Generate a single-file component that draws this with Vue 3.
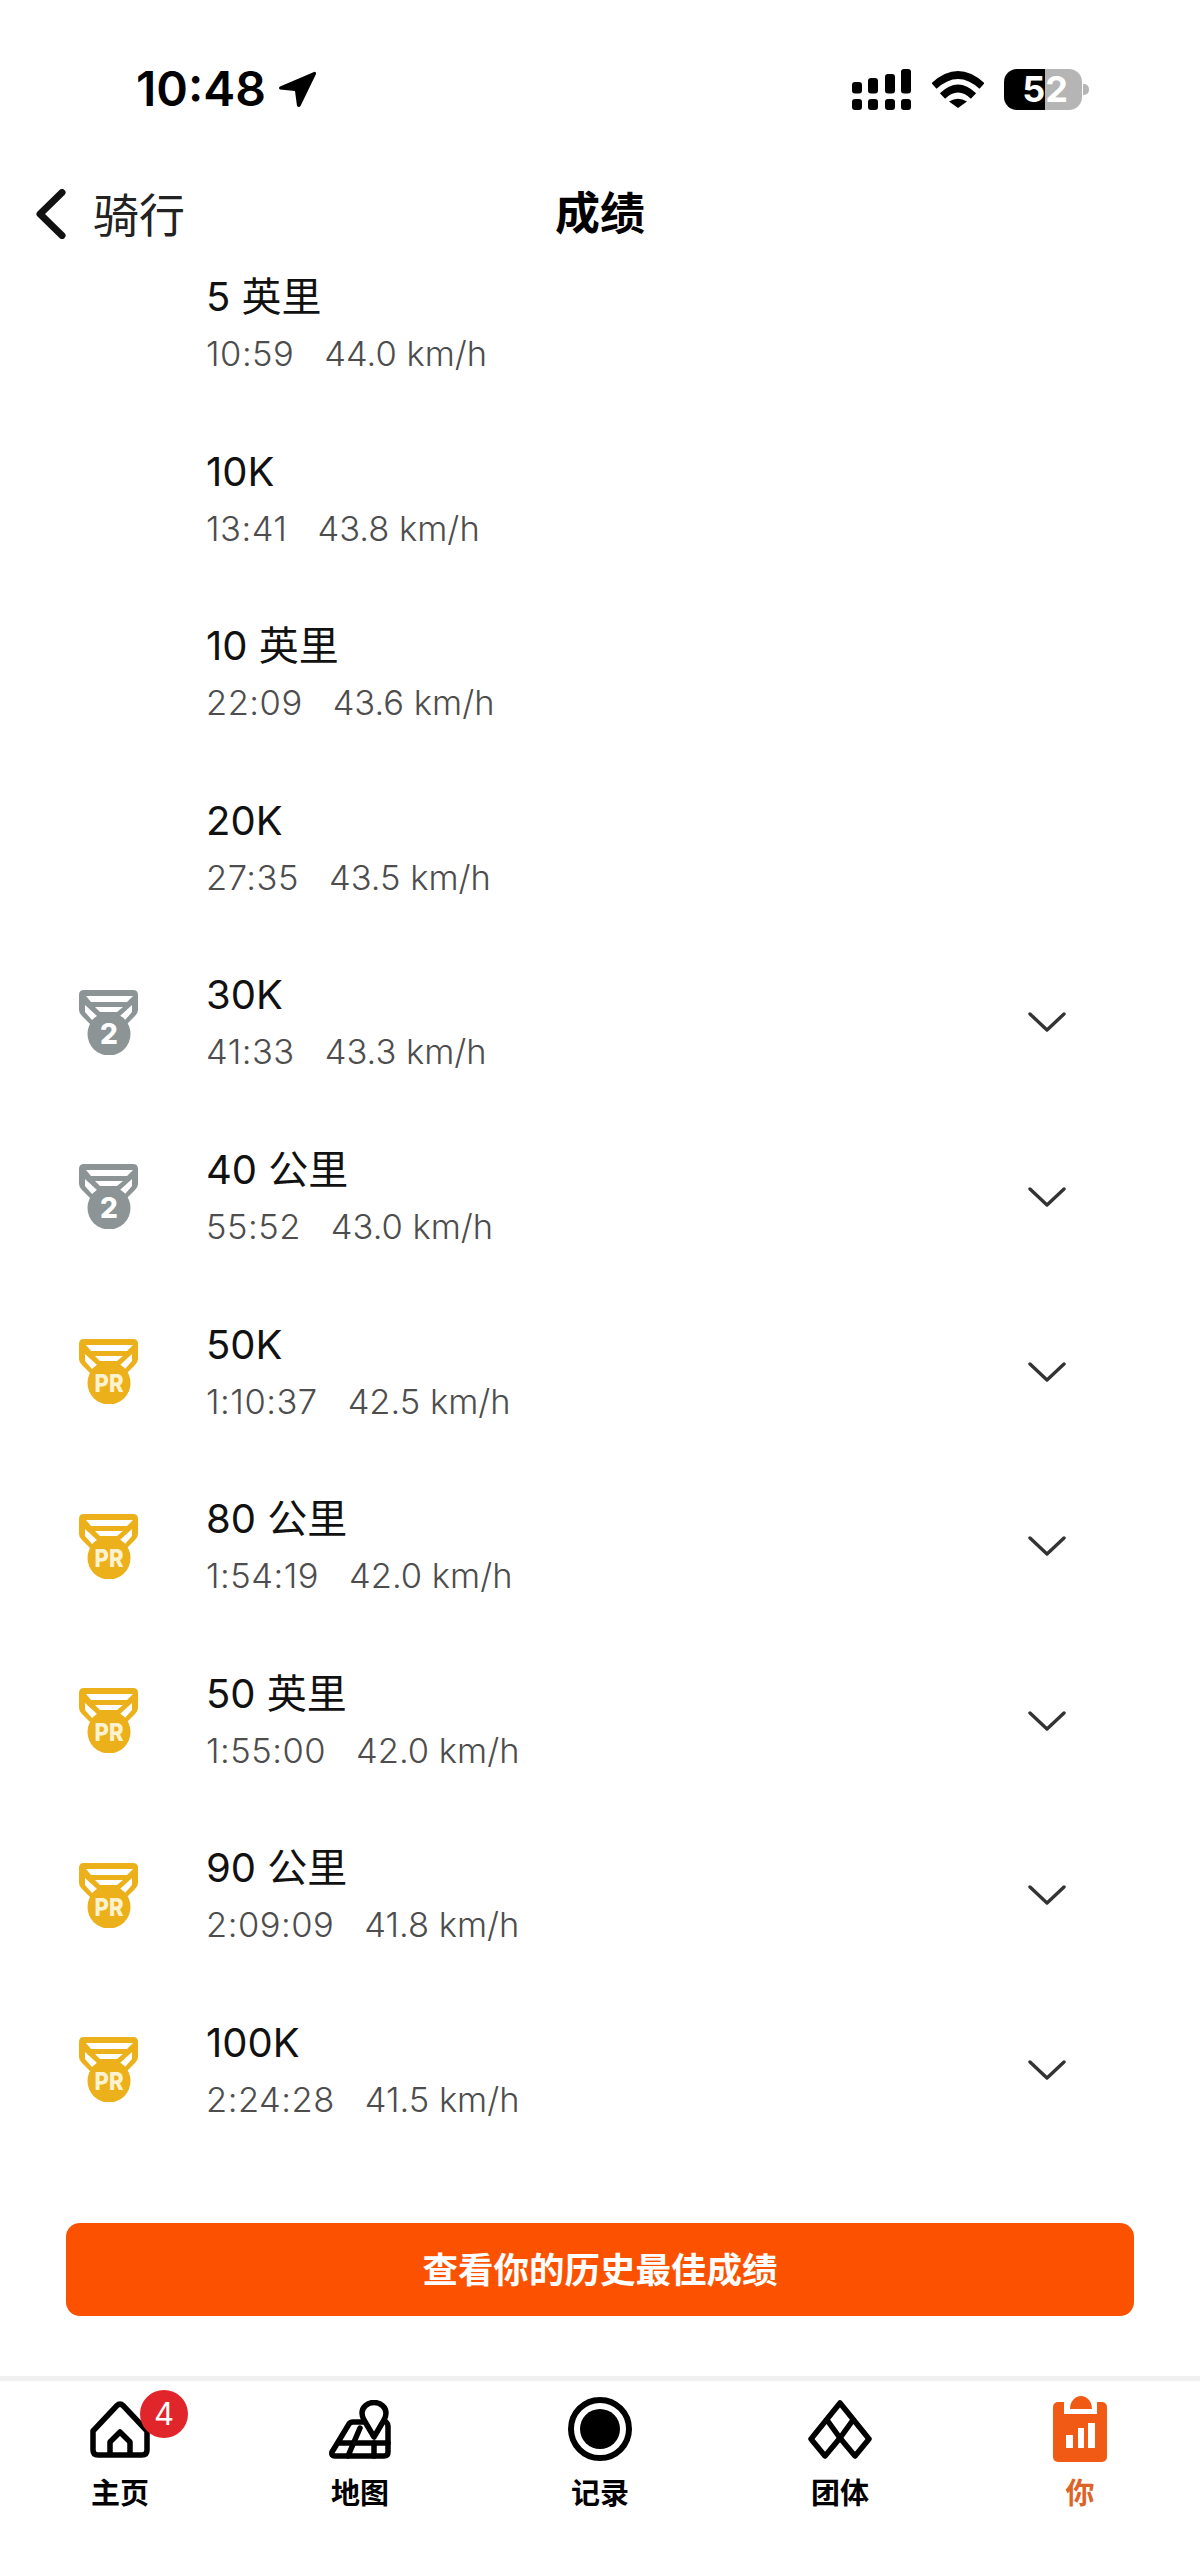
<template>
  <div class="page">
    <div class="status-bar">
      <div class="status-left">
        <span class="clock">10:48</span>
        <svg class="arrow" viewBox="0 0 39 37">
          <path d="M36 1 L2 15.5 Q0 17 2 18.5 L17 20 L19 35 Q21 37 22.5 35 L38 3 Q38 0 36 1 Z" />
        </svg>
      </div>
      <div class="status-right">
        <svg class="signal" viewBox="0 0 59 41">
          <rect v-for="x in dotX" :key="'d' + x" :x="x" y="30" width="10" height="11" rx="3" />
          <rect v-for="(x, i) in dotX" :key="'b' + x" :x="x" :y="barTop[i]" width="10" :height="24.5 - barTop[i]" rx="3" />
        </svg>
        <svg class="wifi" viewBox="0 0 52 37">
          <path d="M2 15 Q26 -7 50 15" fill="none" stroke="#000" stroke-width="7.5" />
          <path d="M10.5 25 Q26 10 41.5 25" fill="none" stroke="#000" stroke-width="7.5" />
          <path d="M17 30.5 Q26 25 35 30.5 L26 37 Z" />
        </svg>
        <div class="battery"><span>52</span></div>
        <div class="battery-nub"></div>
      </div>
    </div>

    <div class="nav-bar">
      <div class="back">
        <svg class="back-icon" viewBox="0 0 30 50">
          <path d="M26 3.5 L4 25 L26 46.5" fill="none" stroke="#111" stroke-width="7" stroke-linecap="round" stroke-linejoin="round" />
        </svg>
        <span class="back-label">骑行</span>
      </div>
      <h1 class="nav-title">成绩</h1>
    </div>

    <div class="list">
      <div v-for="row in rows" :key="row.title" class="row">
        <div class="row-inner">
          <div class="medal-cell">
            <svg v-if="row.medal" class="medal" :class="row.medal === 'PR' ? 'gold' : 'silver'" viewBox="0 0 59 65">
              <path class="medal-body" d="M5 0 H54 Q59 0 59 5 V20 Q59 23 56 26 L42 40 H17 L3 26 Q0 23 0 20 V5 Q0 0 5 0 Z" />
              <path fill="#fff" d="M7 6 H54 L48 12 H12 Z" />
              <path fill="#fff" d="M16 17 H44 L38 22 H21 Z" />
              <path fill="#fff" d="M6 15 L18 26 L13 30 L6 22 Z" />
              <path fill="#fff" d="M53 15 L41 26 L46 30 L53 22 Z" />
              <circle class="medal-body" cx="30" cy="44" r="21.5" />
              <text v-if="row.medal === 'PR'" class="medal-text pr" x="30" y="53" text-anchor="middle" textLength="29" lengthAdjust="spacingAndGlyphs">PR</text>
              <text v-else class="medal-text" x="30" y="54" text-anchor="middle">{{ row.medal }}</text>
            </svg>
          </div>
          <div class="row-text">
            <div class="row-title">{{ row.title }}</div>
            <div class="row-sub"><span class="row-time">{{ row.time }}</span><span>{{ row.speed }}</span></div>
          </div>
          <svg v-if="row.medal" class="chevron" viewBox="0 0 38 22">
            <path d="M2 3 L19 19 L36 3" fill="none" stroke="#333" stroke-width="3.4" stroke-linecap="round" stroke-linejoin="round" />
          </svg>
        </div>
      </div>
    </div>

    <div class="btn-wrap">
      <button class="history-btn">查看你的历史最佳成绩</button>
    </div>

    <div class="tab-bar">
      <div class="tab">
        <div class="tab-icon">
          <svg width="60" height="57" viewBox="0 0 60 57">
            <g fill="none" stroke="#000" stroke-width="5.5" stroke-linejoin="round">
              <path d="M3 30 L27 4.5 Q30 1.5 33 4.5 L57 30 V49 Q57 54 52 54 H8 Q3 54 3 49 Z" />
              <path d="M20 54 V41 L30 31 L40 41 V54" />
            </g>
          </svg>
          <span class="badge">4</span>
        </div>
        <span class="tab-label">主页</span>
      </div>
      <div class="tab">
        <div class="tab-icon">
          <svg width="62" height="59" viewBox="0 0 62 59">
            <g fill="none" stroke="#000" stroke-width="5.5" stroke-linejoin="round" stroke-linecap="round">
              <path d="M34 22 H24 Q21 22 20 24 L3 52 Q2 56 6 56 H55 Q59 56 59 52 V26 Q59 24 57 22" />
              <path d="M10 43 H59" />
              <path d="M31 28 L19 56" />
              <path d="M45 43 V56" />
              <path d="M45 37 L35 20 Q33 16 33 13 A12 10.5 0 0 1 57 13 Q57 16 55 20 Z" fill="#fff" />
            </g>
          </svg>
        </div>
        <span class="tab-label">地图</span>
      </div>
      <div class="tab">
        <div class="tab-icon">
          <svg width="64" height="64" viewBox="0 0 64 64">
            <circle cx="32" cy="32" r="29" fill="none" stroke="#000" stroke-width="6" />
            <circle cx="32" cy="32" r="20" />
          </svg>
        </div>
        <span class="tab-label">记录</span>
      </div>
      <div class="tab">
        <div class="tab-icon">
          <svg width="64" height="59" viewBox="0 0 64 59">
            <g fill="none" stroke="#000" stroke-width="5.5" stroke-linejoin="round" stroke-linecap="round">
              <path d="M32 3 L61 39 L47 56 L32 38 L17 56 L3 39 Z" />
              <path d="M19 20 L32 38 L45 20" />
            </g>
          </svg>
        </div>
        <span class="tab-label">团体</span>
      </div>
      <div class="tab active">
        <div class="tab-icon">
          <svg width="54" height="66" viewBox="0 0 54 66">
            <rect y="6" width="54" height="60" rx="5" fill="#f15a14" />
            <rect x="11" y="0" width="33" height="18" fill="#fff" />
            <path d="M17 13 A11 13 0 0 1 39 13 Z" fill="#f15a14" />
            <rect x="13" y="39" width="7" height="13" fill="#fff" />
            <rect x="25" y="32" width="6" height="20" fill="#fff" />
            <rect x="35" y="27" width="7" height="25" fill="#fff" />
          </svg>
        </div>
        <span class="tab-label">你</span>
      </div>
    </div>
  </div>
</template>

<script setup>
const dotX = [0, 16, 33, 49]
const barTop = [13, 9, 5, 0]

const rows = [
  { title: '5 英里', time: '10:59', speed: '44.0 km/h' },
  { title: '10K', time: '13:41', speed: '43.8 km/h' },
  { title: '10 英里', time: '22:09', speed: '43.6 km/h' },
  { title: '20K', time: '27:35', speed: '43.5 km/h' },
  { title: '30K', time: '41:33', speed: '43.3 km/h', medal: '2' },
  { title: '40 公里', time: '55:52', speed: '43.0 km/h', medal: '2' },
  { title: '50K', time: '1:10:37', speed: '42.5 km/h', medal: 'PR' },
  { title: '80 公里', time: '1:54:19', speed: '42.0 km/h', medal: 'PR' },
  { title: '50 英里', time: '1:55:00', speed: '42.0 km/h', medal: 'PR' },
  { title: '90 公里', time: '2:09:09', speed: '41.8 km/h', medal: 'PR' },
  { title: '100K', time: '2:24:28', speed: '41.5 km/h', medal: 'PR' }
]
</script>

<style>
html, body {
  margin: 0;
  background: #fff;
}
</style>

<style scoped>
.page {
  width: 1200px;
  height: 2570px;
  display: flex;
  flex-direction: column;
  background: #fff;
  color: #000;
  font-family: Inter, "Noto Sans CJK SC", sans-serif;
  overflow: hidden;
}

.status-bar {
  height: 178px;
  flex: none;
  display: flex;
  align-items: center;
  justify-content: space-between;
  padding: 0 111px 0 136px;
}

.status-left {
  display: flex;
  align-items: center;
  gap: 12px;
}

.clock {
  font-size: 48px;
  font-weight: 600;
  line-height: 1;
}

.arrow {
  width: 39px;
  height: 37px;
}

.status-right {
  display: flex;
  align-items: center;
}

.signal {
  width: 59px;
  height: 41px;
  margin-right: 21px;
}

.wifi {
  width: 52px;
  height: 37px;
  margin-right: 20px;
}

.battery {
  width: 78px;
  height: 41px;
  border-radius: 13px;
  background: linear-gradient(90deg, #000 0 52%, #b5b5b5 52% 100%);
  color: #fff;
  font-size: 36px;
  font-weight: 700;
  line-height: 41px;
  text-align: center;
}

.battery span {
  position: relative;
  left: 2px;
}

.battery-nub {
  width: 6px;
  height: 11px;
  margin-left: 1px;
  border-radius: 0 5px 5px 0;
  background: #b5b5b5;
}

.nav-bar {
  height: 92px;
  flex: none;
  box-sizing: border-box;
  padding: 0 36px 22px;
  display: grid;
  grid-template-columns: 1fr auto 1fr;
  align-items: center;
}

.back {
  display: flex;
  align-items: center;
  gap: 27px;
  font-size: 46px;
  color: #222;
}

.back-icon {
  width: 30px;
  height: 50px;
}

.back-label {
  margin-bottom: 4px;
}

.nav-title {
  grid-column: 2;
  margin: 1px 0 0;
  font-size: 45px;
  font-weight: 700;
  line-height: 70px;
}

.list {
  flex: none;
  height: 1921px;
}

.row {
  height: 174.6px;
}

.row-inner {
  height: 114px;
  display: flex;
  align-items: center;
  padding: 0 134px 0 79px;
}

.medal-cell {
  width: 59px;
  height: 65px;
  margin: 0 68px 6px 0;
  flex: none;
}

.medal {
  display: block;
  width: 59px;
  height: 65px;
}

.silver .medal-body {
  fill: #8c9496;
}

.gold .medal-body {
  fill: #ebb01a;
}

.medal-text {
  fill: #fff;
  font-size: 28px;
  font-weight: 800;
}

.medal-text.pr {
  fill: #fdf2d0;
  font-size: 25px;
}

.row-text {
  flex: 1;
}

.row-title {
  font-size: 40px;
  line-height: 54px;
  height: 54px;
  color: #111;
}

.row-sub {
  display: flex;
  gap: 30px;
  font-size: 34.5px;
  line-height: 60px;
  height: 60px;
  color: #4d4d4d;
  font-weight: 300;
}

.row-time {
  letter-spacing: 0.5px;
}

.chevron {
  width: 38px;
  height: 22px;
  flex: none;
  margin-bottom: 6px;
}

.btn-wrap {
  flex: none;
  padding: 32px 66px 0;
}

.history-btn {
  display: block;
  width: 100%;
  height: 93px;
  padding: 0 0 4px;
  border: none;
  border-radius: 14px;
  background: #fc5200;
  color: #fff;
  font-family: inherit;
  font-size: 35.5px;
  font-weight: 700;
}

.tab-bar {
  margin-top: auto;
  height: 194px;
  flex: none;
  box-sizing: border-box;
  border-top: 5px solid #f1f1f1;
  display: grid;
  grid-template-columns: repeat(5, 1fr);
  padding-top: 15px;
}

.tab {
  display: flex;
  flex-direction: column;
  align-items: center;
}

.tab-icon {
  position: relative;
  height: 66px;
  display: flex;
  align-items: center;
  justify-content: center;
}

.badge {
  position: absolute;
  top: -6px;
  left: 50px;
  width: 48px;
  height: 48px;
  border-radius: 50%;
  background: #e0262b;
  color: #fff;
  font-size: 31px;
  line-height: 48px;
  text-align: center;
}

.tab-label {
  margin-top: 15px;
  font-size: 29px;
  font-weight: 700;
  line-height: 34px;
}

.tab.active .tab-label {
  color: #dd6426;
}
</style>
